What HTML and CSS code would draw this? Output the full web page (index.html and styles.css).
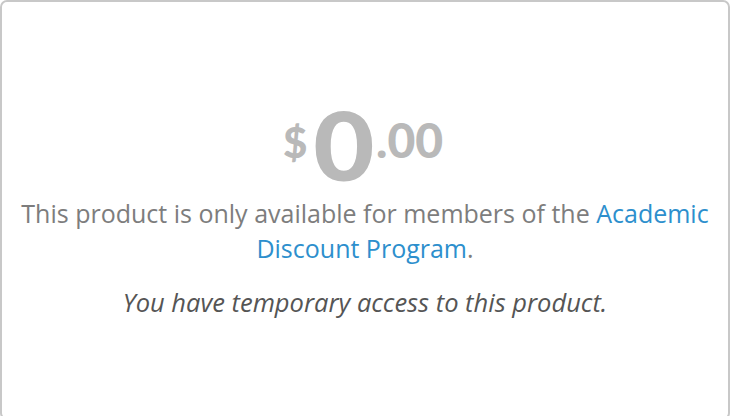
FILE: index.html
```html
<!DOCTYPE html>
<html>
<head>
<meta charset="utf-8">
<link rel="stylesheet" href="styles.css">
</head>
<body>
<div class="card">
  <div class="price">
    <span class="currency">$</span><span class="whole">0</span><span class="cents">.00</span>
  </div>
  <p class="notice">This product is only available for members of the <a href="#" class="link">Academic Discount Program</a>.</p>
  <p class="access">You have temporary access to this product.</p>
</div>
</body>
</html>
```
FILE: styles.css
```css
html, body {
  margin: 0;
  padding: 0;
  background: #ffffff;
  overflow: hidden;
}
body {
  width: 730px;
  height: 416px;
  font-family: "Open Sans", "Liberation Sans", sans-serif;
}
.card {
  box-sizing: border-box;
  width: 730px;
  height: 420px;
  border: 2px solid #c8c8c8;
  border-radius: 7px;
  display: flex;
  flex-direction: column;
  align-items: center;
  padding: 94px 12px 0;
  text-align: center;
}
.price {
  display: flex;
  align-items: baseline;
  color: #b9b9b9;
  font-family: "Lato", sans-serif;
  font-weight: 900;
  line-height: 1;
  height: 96px;
  margin-left: -4px;
}
.currency {
  font-size: 42px;
  position: relative;
  top: -23px;
  margin-right: 9px;
}
.whole {
  display: inline-block;
  font-size: 96px;
  transform: scaleX(1.1);
}
.cents {
  font-size: 48px;
  position: relative;
  top: -23px;
  margin-left: 4px;
}
.notice {
  margin: 4px 0 0;
  font-size: 25px;
  line-height: 35px;
  color: #7d7d7d;
}
.link {
  color: #2d8fcd;
  text-decoration: none;
}
.access {
  margin: 20px 0 0;
  font-size: 25.5px;
  line-height: 32px;
  font-style: italic;
  color: #555555;
}
```
